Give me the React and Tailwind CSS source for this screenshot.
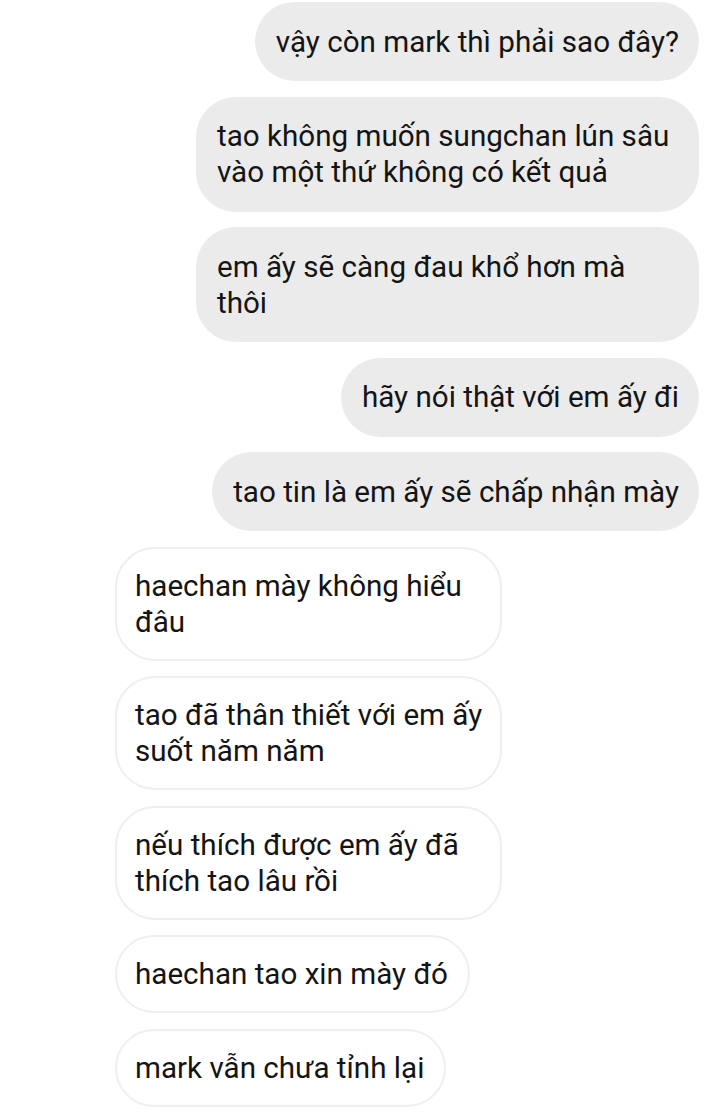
export default function App() {
  const right = [
    ["vậy còn mark thì phải sao đây?"],
    ["tao không muốn sungchan lún sâu", "vào một thứ không có kết quả"],
    ["em ấy sẽ càng đau khổ hơn mà", "thôi"],
    ["hãy nói thật với em ấy đi"],
    ["tao tin là em ấy sẽ chấp nhận mày"],
  ];
  const left = [
    ["haechan mày không hiểu", "đâu"],
    ["tao đã thân thiết với em ấy", "suốt năm năm"],
    ["nếu thích được em ấy đã", "thích tao lâu rồi"],
    ["haechan tao xin mày đó"],
    ["mark vẫn chưa tỉnh lại"],
  ];
  return (
    <div
      className="w-[719px] h-[1119px] bg-white overflow-hidden flex flex-col gap-[15.5px] pt-[2px] text-[29.6px] leading-[36px] text-[#141414]"
      style={{ fontFamily: "Roboto, 'Noto Sans', sans-serif" }}
    >
      {right.map((lines, i) => (
        <div key={i} className="flex justify-end pr-[20px]">
          <div
            className={
              lines.length > 1
                ? "w-[503px] bg-[#ebebeb] rounded-[40px] pl-[21px] pr-[20px] py-[21.5px] whitespace-nowrap"
                : "bg-[#ebebeb] rounded-[40px] pl-[21px] pr-[20px] py-[21.5px] whitespace-nowrap"
            }
          >
            {lines.map((l, j) => (
              <div key={j}>{l}</div>
            ))}
          </div>
        </div>
      ))}
      {left.map((lines, i) => (
        <div key={i} className="flex justify-start pl-[115px]">
          <div
            className={
              lines.length > 1
                ? "w-[387px] bg-white border-2 border-[#efefef] rounded-[40px] pl-[18px] pr-[20px] py-[19px] whitespace-nowrap"
                : "bg-white border-2 border-[#efefef] rounded-[40px] pl-[18px] pr-[20px] py-[19px] whitespace-nowrap"
            }
          >
            {lines.map((l, j) => (
              <div key={j}>{l}</div>
            ))}
          </div>
        </div>
      ))}
    </div>
  );
}
